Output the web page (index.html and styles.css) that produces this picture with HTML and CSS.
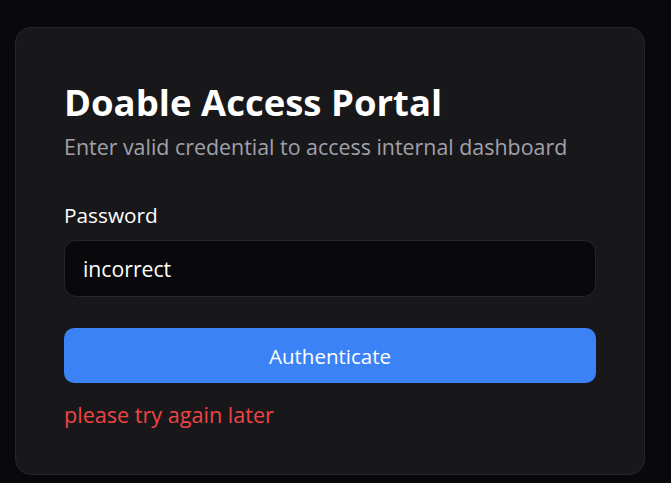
FILE: index.html
```html
<!DOCTYPE html>
<html lang="en">
<head>
<meta charset="utf-8">
<title>Doable Access Portal</title>
<link rel="stylesheet" href="styles.css">
</head>
<body>
<main class="page">
  <form class="card">
    <h1 class="title">Doable Access Portal</h1>
    <p class="subtitle">Enter valid credential to access internal dashboard</p>
    <label class="label" for="pw">Password</label>
    <input class="input" id="pw" type="text" value="incorrect">
    <button class="button" type="button">Authenticate</button>
    <p class="error">please try again later</p>
  </form>
</main>
</body>
</html>
```

FILE: styles.css
```css
* { box-sizing: border-box; }
html, body { margin: 0; padding: 0; }
body {
  background: #09090b;
  color: #fafafa;
  font-family: "Open Sans", "Noto Sans", sans-serif;
  width: 671px;
  height: 483px;
  overflow: hidden;
}
.page {
  padding: 27px 26px 0 15px;
}
.card {
  width: 630px;
  height: 448px;
  background: #18181b;
  border: 1px solid #27272a;
  border-radius: 16px;
  padding: 48px 48px 40px;
  display: flex;
  flex-direction: column;
}
.card > * { flex-shrink: 0; }
.title {
  margin: 0;
  font-size: 36.5px;
  font-weight: 700;
  line-height: 52px;
  color: #ffffff;
}
.subtitle {
  margin: 5px 0 0;
  font-size: 21.4px;
  line-height: 28px;
  color: #a1a1aa;
}
.label {
  margin-top: 41px;
  font-size: 20.8px;
  line-height: 26px;
  color: #ffffff;
}
.input {
  margin-top: 12px;
  height: 57px;
  background: #09090b;
  border: 1px solid #27272a;
  border-radius: 12px;
  padding: 0 18px;
  font-family: inherit;
  font-size: 21.2px;
  color: #ffffff;
  outline: none;
}
.button {
  margin-top: 31px;
  height: 55px;
  border: 0;
  border-radius: 10px;
  background: #3b82f6;
  color: #ffffff;
  font-family: inherit;
  font-size: 20.5px;
}
.error {
  margin: 18px 0 0;
  font-size: 21.6px;
  line-height: 28px;
  color: #ef4444;
}
```
